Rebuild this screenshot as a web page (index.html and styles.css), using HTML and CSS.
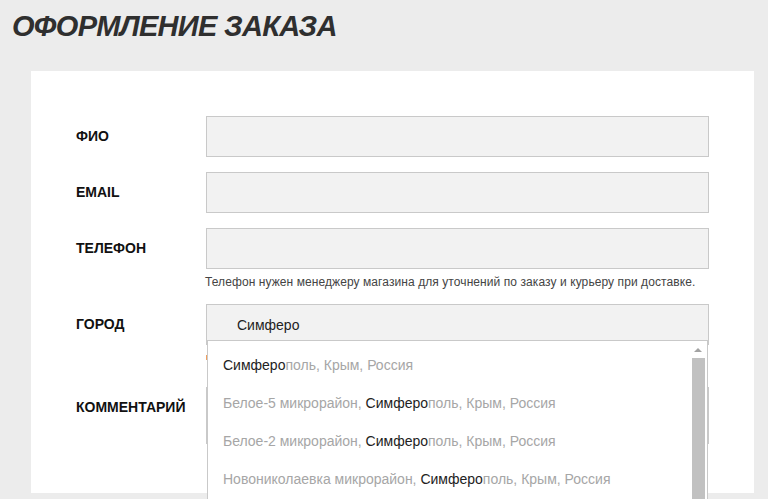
FILE: index.html
```html
<!DOCTYPE html>
<html lang="ru">
<head>
  <meta charset="UTF-8">
  <title>Оформление заказа</title>
  <meta name="viewport" content="width=device-width, initial-scale=1.0">
  <link rel="stylesheet" href="styles.css">
</head>
<body>
  <h1 class="page-title">Оформление заказа</h1>

  <div class="order-box">
    <form class="order-form">
      <div class="form-row">
        <label class="form-label" for="fio">ФИО</label>
        <div class="form-field">
          <input type="text" id="fio" class="form-input">
        </div>
      </div>

      <div class="form-row">
        <label class="form-label" for="email">EMAIL</label>
        <div class="form-field">
          <input type="text" id="email" class="form-input">
        </div>
      </div>

      <div class="form-row">
        <label class="form-label" for="phone">ТЕЛЕФОН</label>
        <div class="form-field">
          <input type="text" id="phone" class="form-input">
          <p class="form-hint">Телефон нужен менеджеру магазина для уточнений по заказу и курьеру при доставке.</p>
        </div>
      </div>

      <div class="form-row row-city">
        <label class="form-label" for="city">ГОРОД</label>
        <div class="form-field">
          <input type="text" id="city" class="form-input city-input" value="Симферо">
          <span class="form-error"></span>

          <div class="suggest">
            <ul class="suggest-list">
              <li><b>Симферо</b>поль, Крым, Россия</li>
              <li>Белое-5 микрорайон, <b>Симферо</b>поль, Крым, Россия</li>
              <li>Белое-2 микрорайон, <b>Симферо</b>поль, Крым, Россия</li>
              <li>Новониколаевка микрорайон, <b>Симферо</b>поль, Крым, Россия</li>
            </ul>
            <div class="suggest-scroll">
              <span class="scroll-up"></span>
              <span class="scroll-thumb"></span>
            </div>
          </div>
        </div>
      </div>

      <div class="form-row">
        <label class="form-label" for="comment">КОММЕНТАРИЙ</label>
        <div class="form-field">
          <textarea id="comment" class="form-input form-textarea"></textarea>
        </div>
      </div>
    </form>
  </div>
</body>
</html>
```

FILE: styles.css
```css
* {
  box-sizing: border-box;
  margin: 0;
  padding: 0;
}

body {
  background-color: #ececec;
  font-family: 'Liberation Sans', Arial, sans-serif;
  color: #111;
  height: 499px;
  overflow: hidden;
}

.page-title {
  font-family: 'Liberation Sans', Arial, sans-serif;
  font-style: italic;
  font-weight: bold;
  font-size: 29px;
  line-height: 32px;
  text-transform: uppercase;
  color: #2f2f2f;
  padding: 10px 0 0 12px;
  height: 71px;
  letter-spacing: -0.7px;
}

.order-box {
  background-color: #fff;
  margin: 0 14px 0 31px;
  width: 723px;
  height: 422px;
  padding: 45px 45px 0 45px;
}

.form-row {
  display: flex;
  align-items: flex-start;
  margin-bottom: 15px;
}

.form-label {
  width: 130px;
  flex-shrink: 0;
  font-weight: bold;
  font-size: 14px;
  line-height: 16px;
  padding-top: 12px;
  color: #111;
}

.form-field {
  position: relative;
  width: 503px;
}

.form-input {
  display: block;
  width: 100%;
  height: 41px;
  border: 1px solid #c9c9c9;
  background-color: #f2f2f2;
  font-family: 'Liberation Sans', Arial, sans-serif;
  font-size: 14px;
  color: #222;
  padding: 0 30px;
  outline: none;
}

.form-hint {
  font-size: 12px;
  line-height: 14px;
  color: #444;
  margin: 6px 0 0 -1px;
  letter-spacing: 0.08px;
}

.row-city {
  margin-bottom: 23px;
}

/* оранжевая метка ошибки, почти закрыта списком */
.form-error {
  display: block;
  width: 20px;
  height: 5px;
  margin-top: 10px;
  border-left: 1px solid #f0a060;
  margin-bottom: 4px;
}

.form-textarea {
  height: 57px;
  resize: none;
}

/* выпадающий список подсказок */
.suggest {
  position: absolute;
  top: 36px;
  left: 1px;
  width: 501px;
  height: 170px;
  background-color: #fff;
  border: 1px solid #c9c9c9;
  border-bottom: none;
  z-index: 5;
  overflow: hidden;
}

.suggest-list {
  list-style: none;
  padding-top: 5px;
}

.suggest-list li {
  height: 38px;
  line-height: 38px;
  padding-left: 15px;
  font-size: 14px;
  color: #a6a6a6;
  white-space: nowrap;
}

.suggest-list li b {
  font-weight: normal;
  color: #222;
}

.suggest-scroll {
  position: absolute;
  top: 0;
  right: 1px;
  width: 15px;
  height: 100%;
  background-color: #fff;
}

.scroll-up {
  position: absolute;
  top: 7px;
  left: 3px;
  width: 0;
  height: 0;
  border-left: 4px solid transparent;
  border-right: 4px solid transparent;
  border-bottom: 4px solid #a3a3a3;
}

.scroll-thumb {
  position: absolute;
  top: 17px;
  left: 1px;
  width: 13px;
  height: 200px;
  background-color: #c1c1c1;
}
```
